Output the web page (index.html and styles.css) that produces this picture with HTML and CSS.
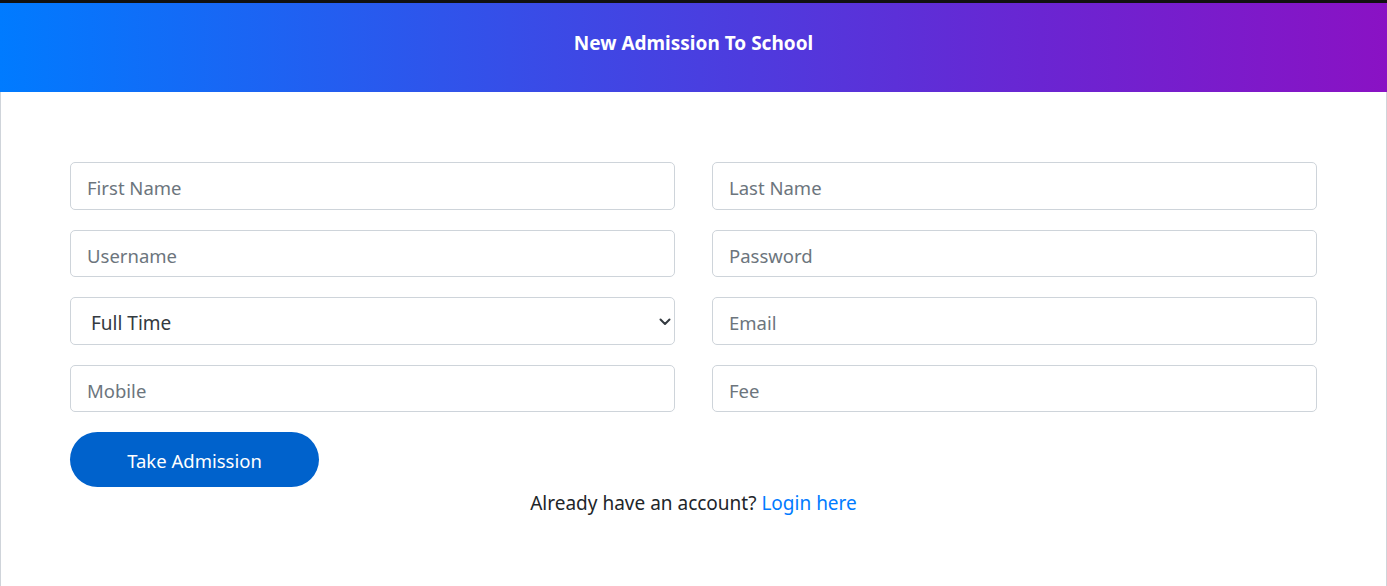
FILE: index.html
```html
<!DOCTYPE html>
<html lang="en">
<head>
<meta charset="utf-8">
<title>New Admission To School</title>
<link rel="stylesheet" href="styles.css">
</head>
<body>
<div class="topbar"></div>
<div class="card">
  <div class="card-header">
    <h1 class="title">New Admission To School</h1>
  </div>
  <div class="card-body">
    <form class="form-grid">
      <input class="field" type="text" placeholder="First Name">
      <input class="field" type="text" placeholder="Last Name">
      <input class="field" type="text" placeholder="Username">
      <input class="field" type="password" placeholder="Password">
      <div class="select-wrap">
        <select class="field select">
          <option>Full Time</option>
          <option>Part Time</option>
        </select>
        <svg class="chevron" width="12" height="8" viewBox="0 0 12 8"><path d="M1.5 1.5 L6 6 L10.5 1.5" fill="none" stroke="#343a40" stroke-width="2" stroke-linecap="round" stroke-linejoin="round"/></svg>
      </div>
      <input class="field" type="email" placeholder="Email">
      <input class="field" type="text" placeholder="Mobile">
      <input class="field" type="text" placeholder="Fee">
    </form>
    <button class="btn" type="button">Take Admission</button>
    <p class="footer-text">Already have an account? <a class="link" href="#">Login here</a></p>
  </div>
</div>
</body>
</html>
```

FILE: styles.css
```css
html, body {
  margin: 0;
  padding: 0;
  background: #fff;
}
body {
  font-family: "Noto Sans", "Open Sans", sans-serif;
  color: #212529;
  overflow: hidden;
}
.topbar {
  height: 3px;
  background: #111;
}
.card {
  border: 1px solid #cfd4da;
  border-top: none;
  min-height: 600px;
}
.card-header {
  height: 89px;
  margin: 0 -1px;
  background: linear-gradient(to right, #007bff 0%, #3b4ae6 40%, #6a25d2 75%, #8a12c4 100%);
  display: flex;
  align-items: center;
  justify-content: center;
}
.title {
  margin: 0;
  color: #fff;
  font-size: 19px;
  font-weight: 700;
  line-height: 1;
  padding-bottom: 8px;
}
.card-body {
  padding: 70px 69px 0 69px;
}
.form-grid {
  display: grid;
  grid-template-columns: 1fr 1fr;
  column-gap: 37px;
  row-gap: 20px;
  margin: 0;
}
.field {
  box-sizing: border-box;
  width: 100%;
  height: 47.5px;
  padding: 4px 16px 0 16px;
  border: 1px solid #ced4da;
  border-radius: 5px;
  font-family: inherit;
  font-size: 18.5px;
  color: #495057;
  background: #fff;
  outline: none;
}
.field::placeholder {
  color: #6c757d;
  opacity: 1;
}
.select-wrap {
  position: relative;
}
.select {
  appearance: none;
  -webkit-appearance: none;
  padding-left: 20px;
  color: #343a40;
  font-size: 19px;
}
.chevron {
  position: absolute;
  right: 4px;
  top: 21px;
}
.btn {
  display: block;
  margin-top: 20px;
  width: 249px;
  height: 55px;
  padding-top: 3px;
  border: none;
  border-radius: 28px;
  background: #0062cc;
  color: #fff;
  font-family: inherit;
  font-size: 18.5px;
  cursor: pointer;
}
.footer-text {
  margin: 3px 0 0 0;
  text-align: center;
  font-size: 19px;
  line-height: 27px;
}
.link {
  color: #007bff;
  text-decoration: none;
}
```
